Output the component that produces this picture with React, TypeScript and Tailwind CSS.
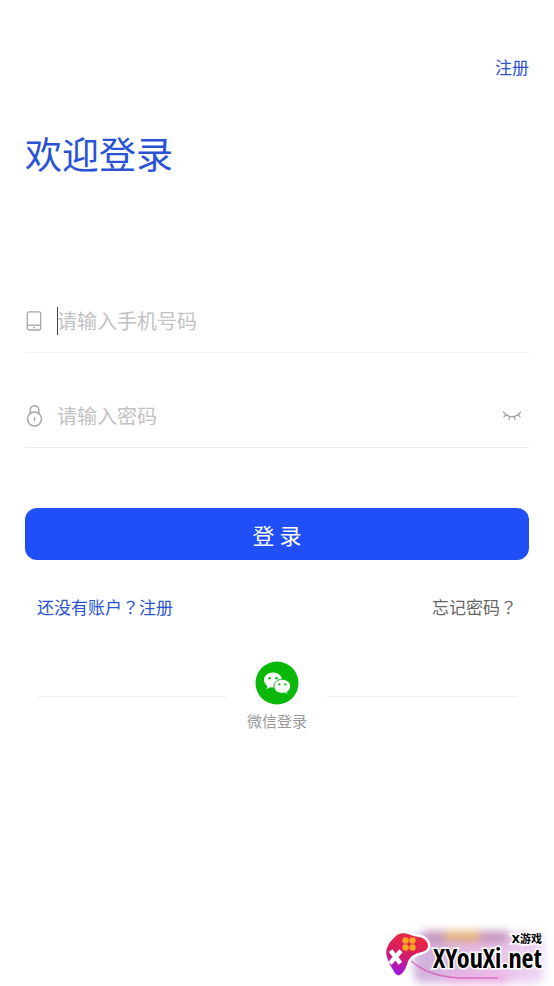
import React, { useState } from "react";

const PhoneIcon = () => (
  <svg className="h-5 w-5 shrink-0" viewBox="0 0 20 20" fill="none" stroke="#a6a6a6" strokeWidth="1.3">
    <rect x="2.3" y="0.8" width="13.4" height="18.2" rx="2" />
    <path d="M2.3 14.2h13.4" />
    <path d="M8.1 16.7h1.8" />
  </svg>
);

const LockIcon = () => (
  <svg className="h-6 w-5 shrink-0" viewBox="0 0 20 24" fill="none" stroke="#a6a6a6" strokeWidth="1.5">
    <circle cx="9.5" cy="15" r="7" />
    <path d="M5.2 9.4V6a4.3 4.3 0 0 1 8.6 0v3.4" />
    <path d="M9.5 12.6v4.8M8.7 15h1.6" strokeWidth="1" />
  </svg>
);

const ClosedEyeIcon = () => (
  <svg className="h-3 w-5" viewBox="0 0 20 12" fill="none" stroke="#a0a0a0" strokeWidth="1.3" strokeLinecap="round">
    <path d="M1.5 2.2C6 8.2 14 8.2 18.5 2.2" />
    <path d="M4 4.6 2 6.8M7.8 6.7 7 9.4M12.2 6.7l.8 2.7M16 4.6l2 2.2" />
  </svg>
);

const WechatIcon = () => (
  <svg className="h-11 w-11" viewBox="0 0 44 44">
    <circle cx="22" cy="22" r="21.5" fill="#0ab80a" />
    <path
      fill="#fff"
      d="M18 11.5c-5 0-9 3.3-9 7.5 0 2.5 1.3 4.5 3.4 5.9l-.9 3.3 3.7-2c1 .2 1.9.3 2.8.3 5 0 9-3.3 9-7.5s-4-7.5-9-7.5z"
    />
    <path
      fill="#fff"
      stroke="#0ab80a"
      strokeWidth="1"
      d="M27.2 18.3c-4.7 0-8.3 3.1-8.3 7s3.6 7 8.3 7c1 0 1.9-.1 2.8-.4l3.2 1.8-.8-2.9c2-1.3 3.2-3.2 3.2-5.5 0-3.9-3.7-7-8.4-7z"
    />
    <g fill="#0ab80a">
      <circle cx="14.6" cy="17.3" r="1.2" />
      <circle cx="21.6" cy="17.3" r="1.2" />
      <circle cx="24.4" cy="23.4" r="1.1" />
      <circle cx="30.3" cy="23.4" r="1.1" />
    </g>
  </svg>
);

const SiteBadge = () => (
  <div className="absolute right-0 bottom-0 h-16 w-44 overflow-hidden text-black">
    <svg className="absolute inset-0 h-full w-full" viewBox="0 0 176 64">
      <defs>
        <filter id="soft" x="-20%" y="-30%" width="140%" height="160%">
          <feGaussianBlur stdDeviation="4" />
        </filter>
        <linearGradient id="pad" x1="0.6" y1="0" x2="0.3" y2="1">
          <stop offset="0" stopColor="#e82a45" />
          <stop offset="0.5" stopColor="#d81b60" />
          <stop offset="1" stopColor="#9c17e8" />
        </linearGradient>
        <linearGradient id="glow">
          <stop offset="0" stopColor="#cdb0dc" />
          <stop offset="0.5" stopColor="#e8bce4" />
          <stop offset="1" stopColor="#ecd6f4" />
        </linearGradient>
      </defs>
      <g filter="url(#soft)">
        <rect x="36" y="11" width="130" height="50" rx="8" fill="url(#glow)" />
        <rect x="46" y="9" width="84" height="12" fill="#c294bc" />
        <rect x="66" y="9" width="36" height="11" fill="#e4b078" />
        <rect x="70" y="52" width="60" height="10" fill="#ecaee6" />
      </g>
      <path d="M30 36c12 12 26 18 50 20h40" fill="none" stroke="#cf4fae" strokeWidth="1.5" opacity="0.7" />
      <path
        d="M19 13c3-2 7-2.5 11-1 4 1.5 7 2.5 11 3 6 1 9 5 9 9 0 4-4 5.5-8 6.500-6 1.500-10 4-12 9-1.500 5-3 9-6 12-3 3-6 2-8-2-3-5-6-10-7.500-16-1.500-8 4-15 10.500-20.500z"
        fill="url(#pad)"
        stroke="#fff"
        strokeWidth="5"
        strokeLinejoin="round"
        paintOrder="stroke"
      />
      <path d="m14 30.500 7 9M21.500 30.500l-8 9" stroke="#fff" strokeWidth="4.500" strokeLinecap="square" />
      <g fill="#ffa51f">
        <circle cx="27.500" cy="18.500" r="3.200" />
        <circle cx="34.500" cy="18.500" r="3.200" />
        <circle cx="27.500" cy="25.500" r="3.200" />
        <circle cx="34.500" cy="25.500" r="3.200" />
      </g>
    </svg>
    <div className="relative flex h-full flex-col items-end pt-[10px] pr-3 font-bold [paint-order:stroke_fill] [-webkit-text-stroke:3px_white]">
      <span className="font-['DejaVu_Sans','Noto_Sans_CJK_SC',sans-serif] text-[11px] leading-4">X游戏</span>
      <span className="font-['Open_Sans_Condensed','Noto_Sans_Condensed','Liberation_Sans_Narrow',sans-serif] text-[26px] leading-5">
        XYouXi.net
      </span>
    </div>
  </div>
);

const App = () => {
  const [phone, setPhone] = useState("");
  const [password, setPassword] = useState("");
  const [showPassword, setShowPassword] = useState(false);

  return (
    <div
      lang="zh-CN"
      className="relative flex min-h-screen flex-col bg-white px-[25px] font-['Noto_Sans_CJK_SC',sans-serif] text-[17px] leading-6 text-[#2a52d4]"
    >
      <header className="flex justify-end pt-[55px]">
        <a href="#register">注册</a>
      </header>

      <h1 className="mt-12 text-[37px] leading-[52px]">欢迎登录</h1>

      <form className="mt-[110px]" onSubmit={(e) => e.preventDefault()}>
        {/* Phone number */}
        <div className="flex h-16 items-center border-b border-[#f3f3f3]">
          <label htmlFor="phone" aria-label="手机号码">
            <PhoneIcon />
          </label>
          <div className="relative ml-3 flex-1">
            {phone === "" && <span className="absolute top-1 left-0 h-7 w-px bg-[#444]" />}
            <input
              id="phone"
              type="tel"
              value={phone}
              placeholder="请输入手机号码"
              onChange={(e) => setPhone(e.target.value)}
              className="h-9 w-full text-xl text-[#333] outline-none placeholder:text-[#c2c2c2]"
            />
          </div>
        </div>

        {/* Password */}
        <div className="mt-[31px] flex h-16 items-center border-b border-[#ebebeb]">
          <label htmlFor="password" aria-label="密码">
            <LockIcon />
          </label>
          <input
            id="password"
            type={showPassword ? "text" : "password"}
            value={password}
            placeholder="请输入密码"
            onChange={(e) => setPassword(e.target.value)}
            className="ml-3 h-9 min-w-0 flex-1 text-xl text-[#333] outline-none placeholder:text-[#c2c2c2]"
          />
          <button
            type="button"
            aria-label="显示密码"
            className="px-[7px]"
            onClick={() => setShowPassword(!showPassword)}
          >
            <ClosedEyeIcon />
          </button>
        </div>

        <button type="submit" className="mt-15 h-13 w-full rounded-xl bg-[#204ff7] text-[22px] text-white">
          登 录
        </button>
      </form>

      <div className="mt-[35px] flex justify-between px-3">
        <a href="#register">
          还没有账户<span lang="zh-TW" className="font-['Noto_Sans_CJK_TC',sans-serif]">？</span>注册
        </a>
        <a href="#forgot" className="text-[#666]">
          忘记密码<span lang="zh-TW" className="font-['Noto_Sans_CJK_TC',sans-serif]">？</span>
        </a>
      </div>

      {/* WeChat login */}
      <div className="mt-[42px] flex items-start gap-5 px-3">
        <div className="mt-[35px] h-px flex-1 bg-[#f2f2f2]" />
        <button type="button" className="flex flex-col items-center gap-1 text-[15px] text-[#999]">
          <WechatIcon />
          微信登录
        </button>
        <div className="mt-[35px] h-px flex-1 bg-[#f2f2f2]" />
      </div>

      <SiteBadge />
    </div>
  );
};

export default App;
